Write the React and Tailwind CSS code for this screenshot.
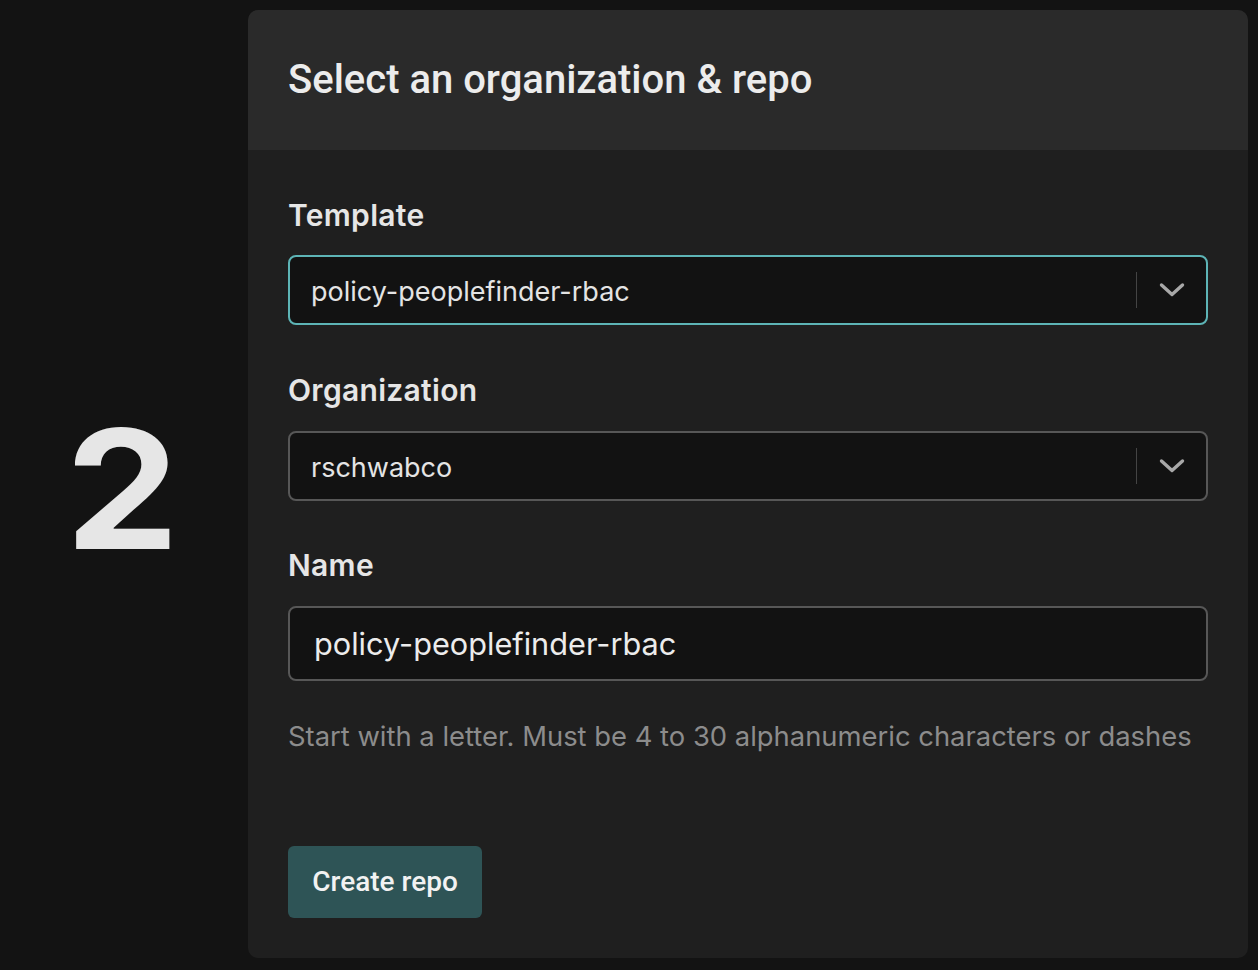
import React from "react";

const inter = { fontFamily: "Inter, 'Noto Sans', sans-serif" };

function Chevron() {
  return (
    <svg width="26" height="16" viewBox="0 0 26 16" fill="none">
      <path d="M2.5 3 L13 12.5 L23.5 3" stroke="#a8a8a8" strokeWidth="3.4" strokeLinecap="round" strokeLinejoin="round" />
    </svg>
  );
}

function Select({ value, focused }) {
  return (
    <div
      className={
        "flex h-[70px] items-center rounded-[8px] bg-[#121212] pl-[21px] " +
        (focused ? "border-2 border-[#5db4b6]" : "border-2 border-[#575757]")
      }
    >
      <span className="flex-1 pt-[4px] text-[27px] text-[#e4e4e4]" style={inter}>{value}</span>
      <div className="h-[36px] w-[1px] bg-[#444444]" />
      <div className="flex w-[69px] items-center justify-center pl-[1px]">
        <Chevron />
      </div>
    </div>
  );
}

function Label({ children }) {
  return (
    <div className="text-[30px] font-semibold leading-[34px] tracking-[0.3px] text-[#e6e6e6]" style={inter}>
      {children}
    </div>
  );
}

export default function App() {
  return (
    <div className="flex h-[970px] w-[1258px] bg-[#131313]">
      <div className="flex w-[248px] items-center justify-center pt-[8px] pr-[4px]">
        <span className="inline-block scale-x-[1.09] text-[166px] font-bold leading-none text-[#e6e6e6]" style={inter}>2</span>
      </div>
      <div className="mt-[10px] mb-[12px] flex w-[1000px] flex-col overflow-hidden rounded-[10px] bg-[#1f1f1f]">
        <div className="flex h-[140px] items-center bg-[#2a2a2a] px-[40px]">
          <h1 className="text-[40px] font-medium text-[#ececec]" style={{ fontFamily: "Roboto, sans-serif" }}>
            Select an organization &amp; repo
          </h1>
        </div>
        <div className="flex flex-col px-[40px] pt-[48px]">
          <Label>Template</Label>
          <div className="mt-[23px]">
            <Select value="policy-peoplefinder-rbac" focused />
          </div>
          <div className="mt-[48px]">
            <Label>Organization</Label>
          </div>
          <div className="mt-[24px]">
            <Select value="rschwabco" />
          </div>
          <div className="mt-[47px]">
            <Label>Name</Label>
          </div>
          <div className="mt-[24px] flex h-[75px] items-center rounded-[8px] border-2 border-[#575757] bg-[#121212] pl-[24px]">
            <span className="pt-[2px] text-[30.7px] text-[#ececec]" style={inter}>policy-peoplefinder-rbac</span>
          </div>
          <div className="mt-[35px] text-[27.4px] text-[#8c8c8c]" style={inter}>
            Start with a letter. Must be 4 to 30 alphanumeric characters or dashes
          </div>
          <div className="mt-[89px]">
            <button
              className="flex h-[72px] w-[194px] items-center justify-center rounded-[6px] bg-[#2e5456] text-[28px] font-medium text-[#f2f2f2]"
              style={{ fontFamily: "Roboto, sans-serif" }}
            >
              Create repo
            </button>
          </div>
        </div>
      </div>
    </div>
  );
}
